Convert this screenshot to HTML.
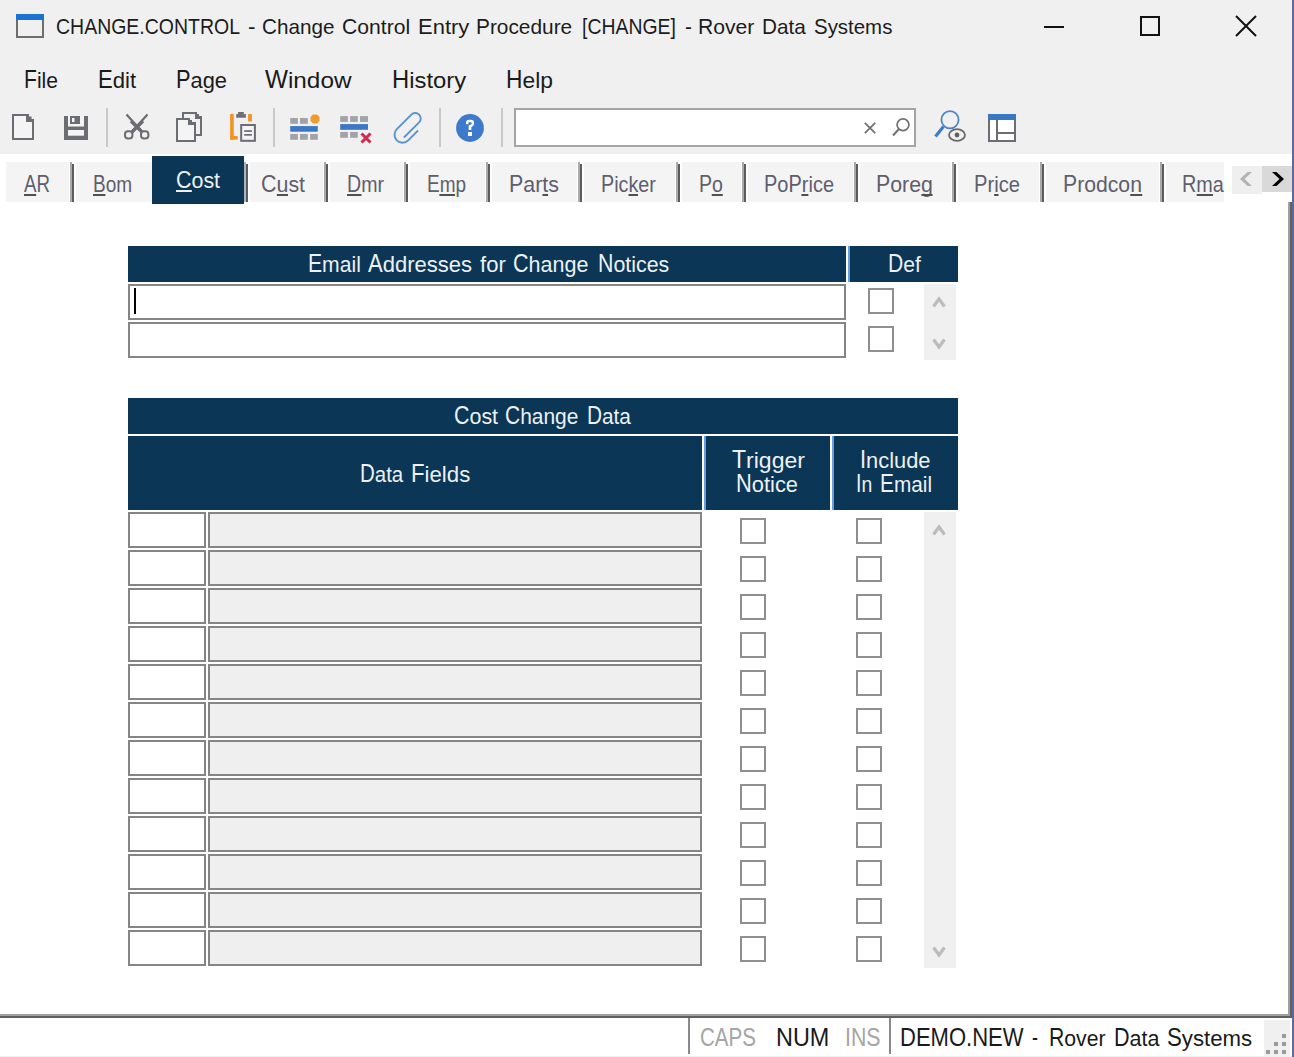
<!DOCTYPE html><html><head><meta charset="utf-8"><style>
html,body{margin:0;padding:0;width:1294px;height:1057px;overflow:hidden;background:#fff;position:relative}
.t{position:absolute;white-space:pre;font-family:"Liberation Sans",sans-serif;transform-origin:0 0}
.t i{display:block}
.t b{display:inline-block;font-weight:normal;transform:scaleY(0.88)}
.r{position:absolute}
</style></head><body>
<div class="r" style="left:0px;top:0px;width:1294px;height:154px;background:#f0f0f0"></div>
<div class="r" style="left:1292px;top:0px;width:2px;height:1057px;background:#5a6b9c"></div>
<div class="r" style="left:16px;top:14px;width:28px;height:24px;border:2px solid #6e6e6e;box-sizing:border-box;background:#f0f0f0"></div>
<div class="r" style="left:16px;top:14px;width:28px;height:6px;background:#1a73d1"></div>
<div class="t" style="left:56.00px;top:16.12px;font-size:23.0px;line-height:23.0px;color:#1c1c1c;transform:scale(0.8470,0.9412);">CHANGE.CONTROL</div>
<div class="t" style="left:248.10px;top:16.12px;font-size:23.0px;line-height:23.0px;color:#1c1c1c;transform:scale(0.9806,0.9412);">-</div>
<div class="t" style="left:261.70px;top:16.12px;font-size:23.0px;line-height:23.0px;color:#1c1c1c;transform:scale(0.8994,0.9412);">C<b style="transform-origin:0 19px;transform:scaleY(0.97)">hange</b></div>
<div class="t" style="left:341.90px;top:16.12px;font-size:23.0px;line-height:23.0px;color:#1c1c1c;transform:scale(0.9185,0.9412);">C<b style="transform-origin:0 19px;transform:scaleY(0.97)">ontrol</b></div>
<div class="t" style="left:417.60px;top:16.12px;font-size:23.0px;line-height:23.0px;color:#1c1c1c;transform:scale(0.9563,0.9412);">E<b style="transform-origin:0 19px;transform:scaleY(0.97)">ntry</b></div>
<div class="t" style="left:475.70px;top:16.12px;font-size:23.0px;line-height:23.0px;color:#1c1c1c;transform:scale(0.9064,0.9412);">P<b style="transform-origin:0 19px;transform:scaleY(0.97)">rocedure</b></div>
<div class="t" style="left:581.50px;top:16.12px;font-size:23.0px;line-height:23.0px;color:#1c1c1c;transform:scale(0.8449,0.9412);">[CHANGE]</div>
<div class="t" style="left:684.70px;top:16.12px;font-size:23.0px;line-height:23.0px;color:#1c1c1c;transform:scale(0.9032,0.9412);">-</div>
<div class="t" style="left:697.50px;top:16.12px;font-size:23.0px;line-height:23.0px;color:#1c1c1c;transform:scale(0.9192,0.9412);">R<b style="transform-origin:0 19px;transform:scaleY(0.97)">over</b></div>
<div class="t" style="left:762.00px;top:16.12px;font-size:23.0px;line-height:23.0px;color:#1c1c1c;transform:scale(0.9026,0.9412);">D<b style="transform-origin:0 19px;transform:scaleY(0.97)">ata</b></div>
<div class="t" style="left:814.10px;top:16.12px;font-size:23.0px;line-height:23.0px;color:#1c1c1c;transform:scale(0.8884,0.9412);">S<b style="transform-origin:0 19px;transform:scaleY(0.97)">ystems</b></div>
<div class="r" style="left:1044px;top:26px;width:20px;height:2px;background:#111"></div>
<div class="r" style="left:1140px;top:16px;width:20px;height:20px;border:2px solid #111;box-sizing:border-box"></div>
<svg class="r" style="left:1234px;top:14px" width="24" height="24"><path d="M2 2L22 22M22 2L2 22" stroke="#111" stroke-width="2"/></svg>
<div class="t" style="left:24.00px;top:67.00px;font-size:25.75px;line-height:25.75px;color:#1a1a1a;transform:scale(0.8193,1.0000);">F<b style="transform-origin:0 21px">ile</b></div>
<div class="t" style="left:98.00px;top:67.00px;font-size:25.75px;line-height:25.75px;color:#1a1a1a;transform:scale(0.8588,1.0000);">E<b style="transform-origin:0 21px">dit</b></div>
<div class="t" style="left:175.60px;top:67.00px;font-size:25.75px;line-height:25.75px;color:#1a1a1a;transform:scale(0.8481,1.0000);">P<b style="transform-origin:0 21px">age</b></div>
<div class="t" style="left:265.40px;top:67.00px;font-size:25.75px;line-height:25.75px;color:#1a1a1a;transform:scale(0.9439,1.0000);">W<b style="transform-origin:0 21px">indow</b></div>
<div class="t" style="left:391.70px;top:67.00px;font-size:25.75px;line-height:25.75px;color:#1a1a1a;transform:scale(0.9259,1.0000);">H<b style="transform-origin:0 21px">istory</b></div>
<div class="t" style="left:505.60px;top:67.00px;font-size:25.75px;line-height:25.75px;color:#1a1a1a;transform:scale(0.8849,1.0000);">H<b style="transform-origin:0 21px">elp</b></div>
<div class="r" style="left:106px;top:108px;width:2px;height:39px;background:#c9c9c9"></div>
<div class="r" style="left:273px;top:108px;width:2px;height:39px;background:#c9c9c9"></div>
<div class="r" style="left:439px;top:108px;width:2px;height:39px;background:#c9c9c9"></div>
<div class="r" style="left:501px;top:108px;width:2px;height:39px;background:#c9c9c9"></div>
<svg class="r" style="left:0;top:100px" width="1100" height="52" viewBox="0 100 1100 52"><rect x="12" y="114" width="14" height="2" fill="#6c6c73"/><rect x="12" y="114" width="2" height="26" fill="#6c6c73"/><rect x="12" y="138" width="22" height="2" fill="#6c6c73"/><rect x="32" y="122" width="2" height="18" fill="#6c6c73"/><path d="M26 114H29V116.5H31.5V119H34V122H26Z" fill="#6c6c73"/><rect x="14" y="116" width="12" height="22" fill="#f4f4f4"/><rect x="26" y="122" width="6" height="16" fill="#f4f4f4"/><rect x="64" y="116" width="24" height="24" fill="#6c6c73"/><rect x="68" y="116" width="16" height="10.5" fill="#f4f4f4"/><rect x="70" y="116" width="10" height="8" fill="#6c6c73"/><rect x="72" y="118" width="2.5" height="4" fill="#f4f4f4"/><rect x="68" y="130" width="16" height="5.699999999999989" fill="#f4f4f4"/><path d="M126.5 114.5L141.5 131M147.5 114.5L132.5 131" stroke="#6c6c73" stroke-width="2.2"/><path d="M131 121L143 133M143 121L131 133" stroke="#6c6c73" stroke-width="3.4"/><rect x="125" y="131.2" width="7.4" height="7.4" rx="3" fill="#f0f0f0" stroke="#6c6c73" stroke-width="2"/><rect x="141" y="131.2" width="7.4" height="7.4" rx="3" fill="#f0f0f0" stroke="#6c6c73" stroke-width="2"/><rect x="182" y="112" width="14" height="2" fill="#6c6c73"/><rect x="182" y="112" width="2" height="6" fill="#6c6c73"/><path d="M195 112H197V114H199V116H202V119H195Z" fill="#6c6c73"/><rect x="200" y="118" width="2" height="18" fill="#6c6c73"/><rect x="196" y="134" width="6" height="2" fill="#6c6c73"/><rect x="178" y="120" width="16" height="20" fill="#f4f4f4"/><rect x="176" y="118" width="13" height="2" fill="#6c6c73"/><rect x="176" y="118" width="2" height="24" fill="#6c6c73"/><rect x="176" y="140" width="20" height="2" fill="#6c6c73"/><rect x="194" y="125" width="2" height="17" fill="#6c6c73"/><path d="M188 118H190V120H192V122H196V125H188Z" fill="#6c6c73"/><rect x="230.1" y="114" width="3.700000000000017" height="25.69999999999999" fill="#f29428"/><rect x="230.1" y="136" width="7.599999999999994" height="3.6999999999999886" fill="#f29428"/><rect x="248.1" y="114" width="3.8000000000000114" height="7.5" fill="#f29428"/><rect x="238.1" y="112" width="5.700000000000017" height="2.200000000000003" fill="#6c6c73"/><rect x="236.2" y="114.1" width="9.700000000000017" height="3.6000000000000085" fill="#6c6c73"/><rect x="240.2" y="124" width="15.700000000000017" height="17.80000000000001" fill="#6c6c73"/><rect x="242.2" y="126" width="11.700000000000017" height="13.800000000000011" fill="#f4f4f4"/><rect x="244.2" y="130.2" width="7.700000000000017" height="1.700000000000017" fill="#6c6c73"/><rect x="244.2" y="134" width="7.700000000000017" height="1.6999999999999886" fill="#6c6c73"/><rect x="290.2" y="118" width="7.699999999999989" height="5.799999999999997" fill="#a3a2a8"/><rect x="300" y="118" width="7.800000000000011" height="5.799999999999997" fill="#a3a2a8"/><path d="M313 114.5H317L319.5 117V121L317 123.5H313L310.5 121V117Z" fill="#f39a2e"/><rect x="290.2" y="126.1" width="27.600000000000023" height="5.599999999999994" fill="#3b78c4"/><rect x="290.2" y="134" width="7.699999999999989" height="5.800000000000011" fill="#a3a2a8"/><rect x="300" y="134" width="7.800000000000011" height="5.800000000000011" fill="#a3a2a8"/><rect x="310.1" y="134" width="7.699999999999989" height="5.800000000000011" fill="#a3a2a8"/><rect x="340.2" y="116.1" width="7.699999999999989" height="5.800000000000011" fill="#a3a2a8"/><rect x="350.1" y="116.1" width="7.699999999999989" height="5.800000000000011" fill="#a3a2a8"/><rect x="360" y="116.1" width="8" height="5.800000000000011" fill="#a3a2a8"/><rect x="340.2" y="124.1" width="27.80000000000001" height="5.700000000000017" fill="#3b78c4"/><rect x="340.2" y="132" width="7.699999999999989" height="5.800000000000011" fill="#a3a2a8"/><rect x="350.1" y="132" width="7.699999999999989" height="5.800000000000011" fill="#a3a2a8"/><path d="M361.5 133.5L370.5 142.5M370.5 133.5L361.5 142.5" stroke="#d22a48" stroke-width="3"/><g transform="translate(408.5,128) rotate(45)"><path d="M8.5 -5L8.5 9A8 8 0 0 1 -7.5 9L-7.5 -11.5A5.5 5.5 0 0 1 3.5 -11.5L3.5 10" fill="none" stroke="#5a92d4" stroke-width="1.9"/></g><circle cx="470" cy="128" r="13.9" fill="#3d7acb"/><path d="M467.2 124.2V122.5Q467.2 121 469 121H471Q472.8 121 472.8 122.5V124Q472.8 125 471.5 125.6L470 126.3V129.5" fill="none" stroke="#fff" stroke-width="2.4"/><rect x="468" y="132" width="4" height="4" fill="#fff"/><rect x="468.8" y="126" width="2.3999999999999773" height="4" fill="#fff"/><circle cx="950" cy="119.8" r="8.6" fill="none" stroke="#4a86c8" stroke-width="1.8"/><path d="M943.5 126.5L935.5 136.5" stroke="#3f7cc4" stroke-width="3.2"/><ellipse cx="957" cy="135" rx="8" ry="5.8" fill="#f0f0f0" stroke="#6a6a6a" stroke-width="1.8"/><circle cx="957" cy="135" r="2.4" fill="#606060"/><rect x="988" y="114" width="28" height="28" fill="#6c6c73"/><rect x="990" y="120" width="6" height="20" fill="#fff"/><rect x="998" y="120" width="16" height="12" fill="#fff"/><rect x="998" y="134" width="16" height="6" fill="#fff"/><rect x="988" y="114" width="28" height="6" fill="#3b78c4"/></svg>
<div class="r" style="left:514px;top:108px;width:402px;height:39px;border:2px solid #a5a5a5;box-sizing:border-box;background:#fff"></div>
<svg class="r" style="left:863px;top:121px" width="14" height="14" viewBox="0 0 14 14"><path d="M1.8 1.8L12.2 12.2M12.2 1.8L1.8 12.2" stroke="#707070" stroke-width="1.7"/></svg>
<svg class="r" style="left:891px;top:117px" width="20" height="21" viewBox="0 0 20 21"><circle cx="12" cy="7.8" r="5.9" fill="none" stroke="#707070" stroke-width="1.7"/><path d="M8 12L2 18.5" stroke="#707070" stroke-width="2"/></svg>
<div class="r" style="left:6px;top:162px;width:63px;height:40px;background:#f4f4f4"></div>
<div class="r" style="left:76px;top:162px;width:167px;height:40px;background:#f4f4f4"></div>
<div class="r" style="left:250px;top:162px;width:73px;height:40px;background:#f4f4f4"></div>
<div class="r" style="left:330px;top:162px;width:73px;height:40px;background:#f4f4f4"></div>
<div class="r" style="left:410px;top:162px;width:75px;height:40px;background:#f4f4f4"></div>
<div class="r" style="left:492px;top:162px;width:85px;height:40px;background:#f4f4f4"></div>
<div class="r" style="left:584px;top:162px;width:91px;height:40px;background:#f4f4f4"></div>
<div class="r" style="left:682px;top:162px;width:59px;height:40px;background:#f4f4f4"></div>
<div class="r" style="left:748px;top:162px;width:105px;height:40px;background:#f4f4f4"></div>
<div class="r" style="left:860px;top:162px;width:91px;height:40px;background:#f4f4f4"></div>
<div class="r" style="left:958px;top:162px;width:81px;height:40px;background:#f4f4f4"></div>
<div class="r" style="left:1046px;top:162px;width:113px;height:40px;background:#f4f4f4"></div>
<div class="r" style="left:1166px;top:162px;width:58px;height:40px;background:#f4f4f4"></div>
<div class="r" style="left:70px;top:162px;width:2px;height:40px;background:#aaaaaa"></div>
<div class="r" style="left:72px;top:164px;width:2px;height:38px;background:#5c5c5c"></div>
<div class="r" style="left:244px;top:162px;width:2px;height:40px;background:#aaaaaa"></div>
<div class="r" style="left:246px;top:164px;width:2px;height:38px;background:#5c5c5c"></div>
<div class="r" style="left:324px;top:162px;width:2px;height:40px;background:#aaaaaa"></div>
<div class="r" style="left:326px;top:164px;width:2px;height:38px;background:#5c5c5c"></div>
<div class="r" style="left:404px;top:162px;width:2px;height:40px;background:#aaaaaa"></div>
<div class="r" style="left:406px;top:164px;width:2px;height:38px;background:#5c5c5c"></div>
<div class="r" style="left:486px;top:162px;width:2px;height:40px;background:#aaaaaa"></div>
<div class="r" style="left:488px;top:164px;width:2px;height:38px;background:#5c5c5c"></div>
<div class="r" style="left:578px;top:162px;width:2px;height:40px;background:#aaaaaa"></div>
<div class="r" style="left:580px;top:164px;width:2px;height:38px;background:#5c5c5c"></div>
<div class="r" style="left:676px;top:162px;width:2px;height:40px;background:#aaaaaa"></div>
<div class="r" style="left:678px;top:164px;width:2px;height:38px;background:#5c5c5c"></div>
<div class="r" style="left:742px;top:162px;width:2px;height:40px;background:#aaaaaa"></div>
<div class="r" style="left:744px;top:164px;width:2px;height:38px;background:#5c5c5c"></div>
<div class="r" style="left:854px;top:162px;width:2px;height:40px;background:#aaaaaa"></div>
<div class="r" style="left:856px;top:164px;width:2px;height:38px;background:#5c5c5c"></div>
<div class="r" style="left:952px;top:162px;width:2px;height:40px;background:#aaaaaa"></div>
<div class="r" style="left:954px;top:164px;width:2px;height:38px;background:#5c5c5c"></div>
<div class="r" style="left:1040px;top:162px;width:2px;height:40px;background:#aaaaaa"></div>
<div class="r" style="left:1042px;top:164px;width:2px;height:38px;background:#5c5c5c"></div>
<div class="r" style="left:1160px;top:162px;width:2px;height:40px;background:#aaaaaa"></div>
<div class="r" style="left:1162px;top:164px;width:2px;height:38px;background:#5c5c5c"></div>
<div class="t" style="left:24.00px;top:173.00px;font-size:23.0px;line-height:23.0px;color:#5e5e6e;transform:scale(0.8125,1.0000);">AR<i style="position:absolute;left:0.00px;width:15.34px;top:20.6px;height:2.00px;background:#505050"></i></div>
<div class="t" style="left:93.00px;top:173.00px;font-size:23.0px;line-height:23.0px;color:#5e5e6e;transform:scale(0.8254,1.0000);">B<b style="transform-origin:0 19px;transform:scaleY(0.98)">om</b><i style="position:absolute;left:0.00px;width:15.34px;top:20.6px;height:2.00px;background:#505050"></i></div>
<div class="t" style="left:261.00px;top:173.00px;font-size:23.0px;line-height:23.0px;color:#5e5e6e;transform:scale(0.9312,1.0000);">C<b style="transform-origin:0 19px;transform:scaleY(0.98)">ust</b><i style="position:absolute;left:16.61px;width:12.79px;top:20.6px;height:2.00px;background:#505050"></i></div>
<div class="t" style="left:347.00px;top:173.00px;font-size:23.0px;line-height:23.0px;color:#5e5e6e;transform:scale(0.8506,1.0000);">D<b style="transform-origin:0 19px;transform:scaleY(0.98)">mr</b><i style="position:absolute;left:0.00px;width:16.61px;top:20.6px;height:2.00px;background:#505050"></i></div>
<div class="t" style="left:427.00px;top:173.00px;font-size:23.0px;line-height:23.0px;color:#5e5e6e;transform:scale(0.8254,1.0000);">E<b style="transform-origin:0 19px;transform:scaleY(0.98)">mp</b><i style="position:absolute;left:15.34px;width:19.16px;top:20.6px;height:2.00px;background:#505050"></i></div>
<div class="t" style="left:509.00px;top:173.00px;font-size:23.0px;line-height:23.0px;color:#5e5e6e;transform:scale(0.9302,1.0000);">P<b style="transform-origin:0 19px;transform:scaleY(0.98)">arts</b><i style="position:absolute;left:35.79px;width:6.39px;top:20.6px;height:2.00px;background:#505050"></i></div>
<div class="t" style="left:601.00px;top:173.00px;font-size:23.0px;line-height:23.0px;color:#5e5e6e;transform:scale(0.8594,1.0000);">P<b style="transform-origin:0 19px;transform:scaleY(0.98)">icker</b><i style="position:absolute;left:31.95px;width:11.50px;top:20.6px;height:2.00px;background:#505050"></i></div>
<div class="t" style="left:699.00px;top:173.00px;font-size:23.0px;line-height:23.0px;color:#5e5e6e;transform:scale(0.8496,1.0000);">P<b style="transform-origin:0 19px;transform:scaleY(0.98)">o</b><i style="position:absolute;left:15.34px;width:12.79px;top:20.6px;height:2.00px;background:#505050"></i></div>
<div class="t" style="left:764.00px;top:173.00px;font-size:23.0px;line-height:23.0px;color:#5e5e6e;transform:scale(0.8696,1.0000);">P<b style="transform-origin:0 19px;transform:scaleY(0.98)">o</b>P<b style="transform-origin:0 19px;transform:scaleY(0.98)">rice</b><i style="position:absolute;left:43.47px;width:7.66px;top:20.6px;height:2.00px;background:#505050"></i></div>
<div class="t" style="left:876.00px;top:173.00px;font-size:23.0px;line-height:23.0px;color:#5e5e6e;transform:scale(0.9268,1.0000);">P<b style="transform-origin:0 19px;transform:scaleY(0.98)">oreg</b><i style="position:absolute;left:48.59px;width:12.79px;top:20.6px;height:2.00px;background:#505050"></i></div>
<div class="t" style="left:974.00px;top:173.00px;font-size:23.0px;line-height:23.0px;color:#5e5e6e;transform:scale(0.8762,1.0000);">P<b style="transform-origin:0 19px;transform:scaleY(0.98)">rice</b><i style="position:absolute;left:23.00px;width:5.11px;top:20.6px;height:2.00px;background:#505050"></i></div>
<div class="t" style="left:1063.00px;top:173.00px;font-size:23.0px;line-height:23.0px;color:#5e5e6e;transform:scale(0.9213,1.0000);">P<b style="transform-origin:0 19px;transform:scaleY(0.98)">rodcon</b><i style="position:absolute;left:72.88px;width:12.79px;top:20.6px;height:2.00px;background:#505050"></i></div>
<div class="t" style="left:1182.00px;top:173.00px;font-size:23.0px;line-height:23.0px;color:#5e5e6e;transform:scale(0.8615,1.0000);">R<b style="transform-origin:0 19px;transform:scaleY(0.98)">ma</b><i style="position:absolute;left:16.61px;width:19.16px;top:20.6px;height:2.00px;background:#505050"></i></div>
<div class="r" style="left:152px;top:156px;width:92px;height:48px;background:#0b3656"></div>
<div class="r" style="left:244px;top:162px;width:2px;height:40px;background:#a9b6c0"></div>
<div class="t" style="left:176.00px;top:169.00px;font-size:23.0px;line-height:23.0px;color:#edf1f4;transform:scale(0.9312,1.0000);">C<b style="transform-origin:0 19px;transform:scaleY(0.98)">ost</b><i style="position:absolute;left:0.00px;width:16.61px;top:20.6px;height:2.00px;background:#edf1f4"></i></div>
<div class="r" style="left:1232px;top:166px;width:30px;height:28px;background:#efefef"></div>
<div class="r" style="left:1262px;top:166px;width:30px;height:26px;background:#d9d9d9"></div>
<svg class="r" style="left:1230px;top:160px" width="64" height="40" viewBox="1230 160 64 40"><path d="M1252 172H1247.5L1240 179L1247.5 186H1252L1244.5 179Z" fill="#b3b3b3"/><path d="M1272 172H1276.5L1284 179L1276.5 186H1272L1279.5 179Z" fill="#000"/></svg>
<div class="r" style="left:1288px;top:202px;width:2px;height:814px;background:#a0a0a0"></div>
<div class="r" style="left:1290px;top:202px;width:2px;height:816px;background:#606060"></div>
<div class="r" style="left:0px;top:1014px;width:1290px;height:2px;background:#a0a0a0"></div>
<div class="r" style="left:0px;top:1016px;width:1292px;height:2px;background:#606060"></div>
<div class="r" style="left:0px;top:1056px;width:1292px;height:1px;background:#f0f0f0"></div>
<div class="r" style="left:128px;top:246px;width:718px;height:36px;background:#0b3656"></div>
<div class="r" style="left:848px;top:246px;width:110px;height:36px;background:#0b3656;border-left:2px solid #6a9fdb;box-sizing:border-box"></div>
<div class="t" style="left:308.00px;top:251.00px;font-size:25.75px;line-height:25.75px;color:#edf1f4;transform:scale(0.8217,1.0000);">E<b style="transform-origin:0 21px">mail</b></div>
<div class="t" style="left:368.30px;top:251.00px;font-size:25.75px;line-height:25.75px;color:#edf1f4;transform:scale(0.8550,1.0000);">A<b style="transform-origin:0 21px">ddresses</b></div>
<div class="t" style="left:480.20px;top:251.00px;font-size:25.75px;line-height:25.75px;color:#edf1f4;transform:scale(0.8567,1.0000);"><b style="transform-origin:0 21px">for</b></div>
<div class="t" style="left:512.80px;top:251.00px;font-size:25.75px;line-height:25.75px;color:#edf1f4;transform:scale(0.8355,1.0000);">C<b style="transform-origin:0 21px">hange</b></div>
<div class="t" style="left:597.50px;top:251.00px;font-size:25.75px;line-height:25.75px;color:#edf1f4;transform:scale(0.8292,1.0000);">N<b style="transform-origin:0 21px">otices</b></div>
<div class="t" style="left:888.00px;top:251.00px;font-size:25.75px;line-height:25.75px;color:#edf1f4;transform:scale(0.8199,1.0000);">D<b style="transform-origin:0 21px">ef</b></div>
<div class="r" style="left:128px;top:284px;width:718px;height:36px;border:2px solid #858585;box-sizing:border-box;background:#fff"></div>
<div class="r" style="left:128px;top:322px;width:718px;height:36px;border:2px solid #858585;box-sizing:border-box;background:#fff"></div>
<div class="r" style="left:134px;top:288px;width:2px;height:26px;background:#000"></div>
<div class="r" style="left:868px;top:288px;width:26px;height:26px;border:2px solid #8f8f8f;box-sizing:border-box;background:#fff"></div>
<div class="r" style="left:868px;top:326px;width:26px;height:26px;border:2px solid #8f8f8f;box-sizing:border-box;background:#fff"></div>
<div class="r" style="left:924px;top:284px;width:32px;height:76px;background:#f0f0f0"></div>
<svg class="r" style="left:920px;top:292px" width="40" height="22" viewBox="920 292 40 22"><path d="M933.5 306.5L939 299L944.5 306.5" fill="none" stroke="#bcbcbc" stroke-width="3.2" stroke-linejoin="miter"/></svg>
<svg class="r" style="left:920px;top:334px" width="40" height="22" viewBox="920 334 40 22"><path d="M933.5 339.5L939 347L944.5 339.5" fill="none" stroke="#bcbcbc" stroke-width="3.2" stroke-linejoin="miter"/></svg>
<div class="r" style="left:128px;top:398px;width:830px;height:36px;background:#0b3656"></div>
<div class="r" style="left:128px;top:436px;width:574px;height:74px;background:#0b3656"></div>
<div class="r" style="left:704px;top:436px;width:126px;height:74px;background:#0b3656;border-left:2px solid #6a9fdb;box-sizing:border-box"></div>
<div class="r" style="left:832px;top:436px;width:126px;height:74px;background:#0b3656;border-left:2px solid #6a9fdb;box-sizing:border-box"></div>
<div class="t" style="left:453.50px;top:403.00px;font-size:25.75px;line-height:25.75px;color:#edf1f4;transform:scale(0.8321,1.0000);">C<b style="transform-origin:0 21px">ost</b></div>
<div class="t" style="left:505.30px;top:403.00px;font-size:25.75px;line-height:25.75px;color:#edf1f4;transform:scale(0.8133,1.0000);">C<b style="transform-origin:0 21px">hange</b></div>
<div class="t" style="left:587.20px;top:403.00px;font-size:25.75px;line-height:25.75px;color:#edf1f4;transform:scale(0.8073,1.0000);">D<b style="transform-origin:0 21px">ata</b></div>
<div class="t" style="left:359.50px;top:461.00px;font-size:25.75px;line-height:25.75px;color:#edf1f4;transform:scale(0.7945,1.0000);">D<b style="transform-origin:0 21px">ata</b></div>
<div class="t" style="left:411.30px;top:461.00px;font-size:25.75px;line-height:25.75px;color:#edf1f4;transform:scale(0.8625,1.0000);">F<b style="transform-origin:0 21px">ields</b></div>
<div class="t" style="left:732.00px;top:447.00px;font-size:25.75px;line-height:25.75px;color:#edf1f4;transform:scale(0.8944,1.0000);">T<b style="transform-origin:0 21px">rigger</b></div>
<div class="t" style="left:736.00px;top:471.00px;font-size:25.75px;line-height:25.75px;color:#edf1f4;transform:scale(0.8493,1.0000);">N<b style="transform-origin:0 21px">otice</b></div>
<div class="t" style="left:859.50px;top:447.00px;font-size:25.75px;line-height:25.75px;color:#edf1f4;transform:scale(0.8494,1.0000);">I<b style="transform-origin:0 21px">nclude</b></div>
<div class="t" style="left:855.80px;top:471.00px;font-size:25.75px;line-height:25.75px;color:#edf1f4;transform:scale(0.7535,1.0000);">I<b style="transform-origin:0 21px">n</b></div>
<div class="t" style="left:880.20px;top:471.00px;font-size:25.75px;line-height:25.75px;color:#edf1f4;transform:scale(0.8078,1.0000);">E<b style="transform-origin:0 21px">mail</b></div>
<div class="r" style="left:128px;top:512px;width:78px;height:36px;border:2px solid #858585;box-sizing:border-box;background:#fff"></div>
<div class="r" style="left:208px;top:512px;width:494px;height:36px;border:2px solid #858585;box-sizing:border-box;background:#efefef"></div>
<div class="r" style="left:740px;top:518px;width:26px;height:26px;border:2px solid #8f8f8f;box-sizing:border-box;background:#fff"></div>
<div class="r" style="left:856px;top:518px;width:26px;height:26px;border:2px solid #8f8f8f;box-sizing:border-box;background:#fff"></div>
<div class="r" style="left:128px;top:550px;width:78px;height:36px;border:2px solid #858585;box-sizing:border-box;background:#fff"></div>
<div class="r" style="left:208px;top:550px;width:494px;height:36px;border:2px solid #858585;box-sizing:border-box;background:#efefef"></div>
<div class="r" style="left:740px;top:556px;width:26px;height:26px;border:2px solid #8f8f8f;box-sizing:border-box;background:#fff"></div>
<div class="r" style="left:856px;top:556px;width:26px;height:26px;border:2px solid #8f8f8f;box-sizing:border-box;background:#fff"></div>
<div class="r" style="left:128px;top:588px;width:78px;height:36px;border:2px solid #858585;box-sizing:border-box;background:#fff"></div>
<div class="r" style="left:208px;top:588px;width:494px;height:36px;border:2px solid #858585;box-sizing:border-box;background:#efefef"></div>
<div class="r" style="left:740px;top:594px;width:26px;height:26px;border:2px solid #8f8f8f;box-sizing:border-box;background:#fff"></div>
<div class="r" style="left:856px;top:594px;width:26px;height:26px;border:2px solid #8f8f8f;box-sizing:border-box;background:#fff"></div>
<div class="r" style="left:128px;top:626px;width:78px;height:36px;border:2px solid #858585;box-sizing:border-box;background:#fff"></div>
<div class="r" style="left:208px;top:626px;width:494px;height:36px;border:2px solid #858585;box-sizing:border-box;background:#efefef"></div>
<div class="r" style="left:740px;top:632px;width:26px;height:26px;border:2px solid #8f8f8f;box-sizing:border-box;background:#fff"></div>
<div class="r" style="left:856px;top:632px;width:26px;height:26px;border:2px solid #8f8f8f;box-sizing:border-box;background:#fff"></div>
<div class="r" style="left:128px;top:664px;width:78px;height:36px;border:2px solid #858585;box-sizing:border-box;background:#fff"></div>
<div class="r" style="left:208px;top:664px;width:494px;height:36px;border:2px solid #858585;box-sizing:border-box;background:#efefef"></div>
<div class="r" style="left:740px;top:670px;width:26px;height:26px;border:2px solid #8f8f8f;box-sizing:border-box;background:#fff"></div>
<div class="r" style="left:856px;top:670px;width:26px;height:26px;border:2px solid #8f8f8f;box-sizing:border-box;background:#fff"></div>
<div class="r" style="left:128px;top:702px;width:78px;height:36px;border:2px solid #858585;box-sizing:border-box;background:#fff"></div>
<div class="r" style="left:208px;top:702px;width:494px;height:36px;border:2px solid #858585;box-sizing:border-box;background:#efefef"></div>
<div class="r" style="left:740px;top:708px;width:26px;height:26px;border:2px solid #8f8f8f;box-sizing:border-box;background:#fff"></div>
<div class="r" style="left:856px;top:708px;width:26px;height:26px;border:2px solid #8f8f8f;box-sizing:border-box;background:#fff"></div>
<div class="r" style="left:128px;top:740px;width:78px;height:36px;border:2px solid #858585;box-sizing:border-box;background:#fff"></div>
<div class="r" style="left:208px;top:740px;width:494px;height:36px;border:2px solid #858585;box-sizing:border-box;background:#efefef"></div>
<div class="r" style="left:740px;top:746px;width:26px;height:26px;border:2px solid #8f8f8f;box-sizing:border-box;background:#fff"></div>
<div class="r" style="left:856px;top:746px;width:26px;height:26px;border:2px solid #8f8f8f;box-sizing:border-box;background:#fff"></div>
<div class="r" style="left:128px;top:778px;width:78px;height:36px;border:2px solid #858585;box-sizing:border-box;background:#fff"></div>
<div class="r" style="left:208px;top:778px;width:494px;height:36px;border:2px solid #858585;box-sizing:border-box;background:#efefef"></div>
<div class="r" style="left:740px;top:784px;width:26px;height:26px;border:2px solid #8f8f8f;box-sizing:border-box;background:#fff"></div>
<div class="r" style="left:856px;top:784px;width:26px;height:26px;border:2px solid #8f8f8f;box-sizing:border-box;background:#fff"></div>
<div class="r" style="left:128px;top:816px;width:78px;height:36px;border:2px solid #858585;box-sizing:border-box;background:#fff"></div>
<div class="r" style="left:208px;top:816px;width:494px;height:36px;border:2px solid #858585;box-sizing:border-box;background:#efefef"></div>
<div class="r" style="left:740px;top:822px;width:26px;height:26px;border:2px solid #8f8f8f;box-sizing:border-box;background:#fff"></div>
<div class="r" style="left:856px;top:822px;width:26px;height:26px;border:2px solid #8f8f8f;box-sizing:border-box;background:#fff"></div>
<div class="r" style="left:128px;top:854px;width:78px;height:36px;border:2px solid #858585;box-sizing:border-box;background:#fff"></div>
<div class="r" style="left:208px;top:854px;width:494px;height:36px;border:2px solid #858585;box-sizing:border-box;background:#efefef"></div>
<div class="r" style="left:740px;top:860px;width:26px;height:26px;border:2px solid #8f8f8f;box-sizing:border-box;background:#fff"></div>
<div class="r" style="left:856px;top:860px;width:26px;height:26px;border:2px solid #8f8f8f;box-sizing:border-box;background:#fff"></div>
<div class="r" style="left:128px;top:892px;width:78px;height:36px;border:2px solid #858585;box-sizing:border-box;background:#fff"></div>
<div class="r" style="left:208px;top:892px;width:494px;height:36px;border:2px solid #858585;box-sizing:border-box;background:#efefef"></div>
<div class="r" style="left:740px;top:898px;width:26px;height:26px;border:2px solid #8f8f8f;box-sizing:border-box;background:#fff"></div>
<div class="r" style="left:856px;top:898px;width:26px;height:26px;border:2px solid #8f8f8f;box-sizing:border-box;background:#fff"></div>
<div class="r" style="left:128px;top:930px;width:78px;height:36px;border:2px solid #858585;box-sizing:border-box;background:#fff"></div>
<div class="r" style="left:208px;top:930px;width:494px;height:36px;border:2px solid #858585;box-sizing:border-box;background:#efefef"></div>
<div class="r" style="left:740px;top:936px;width:26px;height:26px;border:2px solid #8f8f8f;box-sizing:border-box;background:#fff"></div>
<div class="r" style="left:856px;top:936px;width:26px;height:26px;border:2px solid #8f8f8f;box-sizing:border-box;background:#fff"></div>
<div class="r" style="left:924px;top:512px;width:32px;height:456px;background:#f0f0f0"></div>
<svg class="r" style="left:920px;top:520px" width="40" height="22" viewBox="920 520 40 22"><path d="M933.5 534.5L939 527L944.5 534.5" fill="none" stroke="#bcbcbc" stroke-width="3.2" stroke-linejoin="miter"/></svg>
<svg class="r" style="left:920px;top:942px" width="40" height="22" viewBox="920 942 40 22"><path d="M933.5 947.5L939 955L944.5 947.5" fill="none" stroke="#bcbcbc" stroke-width="3.2" stroke-linejoin="miter"/></svg>
<div class="r" style="left:688px;top:1018px;width:2px;height:36px;background:#8a8a8a"></div>
<div class="r" style="left:889px;top:1018px;width:2px;height:36px;background:#8a8a8a"></div>
<div class="t" style="left:700.00px;top:1025.00px;font-size:25.75px;line-height:25.75px;color:#a5a5a5;transform:scale(0.7972,1.0000);">CAPS</div>
<div class="t" style="left:776.00px;top:1025.00px;font-size:25.75px;line-height:25.75px;color:#1a1a1a;transform:scale(0.9106,1.0000);">NUM</div>
<div class="t" style="left:845.00px;top:1025.00px;font-size:25.75px;line-height:25.75px;color:#a5a5a5;transform:scale(0.8279,1.0000);">INS</div>
<div class="t" style="left:900.00px;top:1025.00px;font-size:25.75px;line-height:25.75px;color:#1a1a1a;transform:scale(0.8554,1.0000);">DEMO.NEW</div>
<div class="t" style="left:1031.70px;top:1025.00px;font-size:25.75px;line-height:25.75px;color:#1a1a1a;transform:scale(0.6941,1.0000);">-</div>
<div class="t" style="left:1048.60px;top:1025.00px;font-size:25.75px;line-height:25.75px;color:#1a1a1a;transform:scale(0.8233,1.0000);">R<b style="transform-origin:0 21px">over</b></div>
<div class="t" style="left:1114.00px;top:1025.00px;font-size:25.75px;line-height:25.75px;color:#1a1a1a;transform:scale(0.8367,1.0000);">D<b style="transform-origin:0 21px">ata</b></div>
<div class="t" style="left:1166.90px;top:1025.00px;font-size:25.75px;line-height:25.75px;color:#1a1a1a;transform:scale(0.8628,1.0000);">S<b style="transform-origin:0 21px">ystems</b></div>
<div class="r" style="left:1264px;top:1020px;width:26px;height:36px;background:#f0f0f0"></div>
<div class="r" style="left:1282px;top:1034px;width:4px;height:4px;background:#9a9a9a"></div>
<div class="r" style="left:1274px;top:1042px;width:4px;height:4px;background:#9a9a9a"></div>
<div class="r" style="left:1282px;top:1042px;width:4px;height:4px;background:#9a9a9a"></div>
<div class="r" style="left:1266px;top:1050px;width:4px;height:4px;background:#9a9a9a"></div>
<div class="r" style="left:1274px;top:1050px;width:4px;height:4px;background:#9a9a9a"></div>
<div class="r" style="left:1282px;top:1050px;width:4px;height:4px;background:#9a9a9a"></div>
</body></html>
